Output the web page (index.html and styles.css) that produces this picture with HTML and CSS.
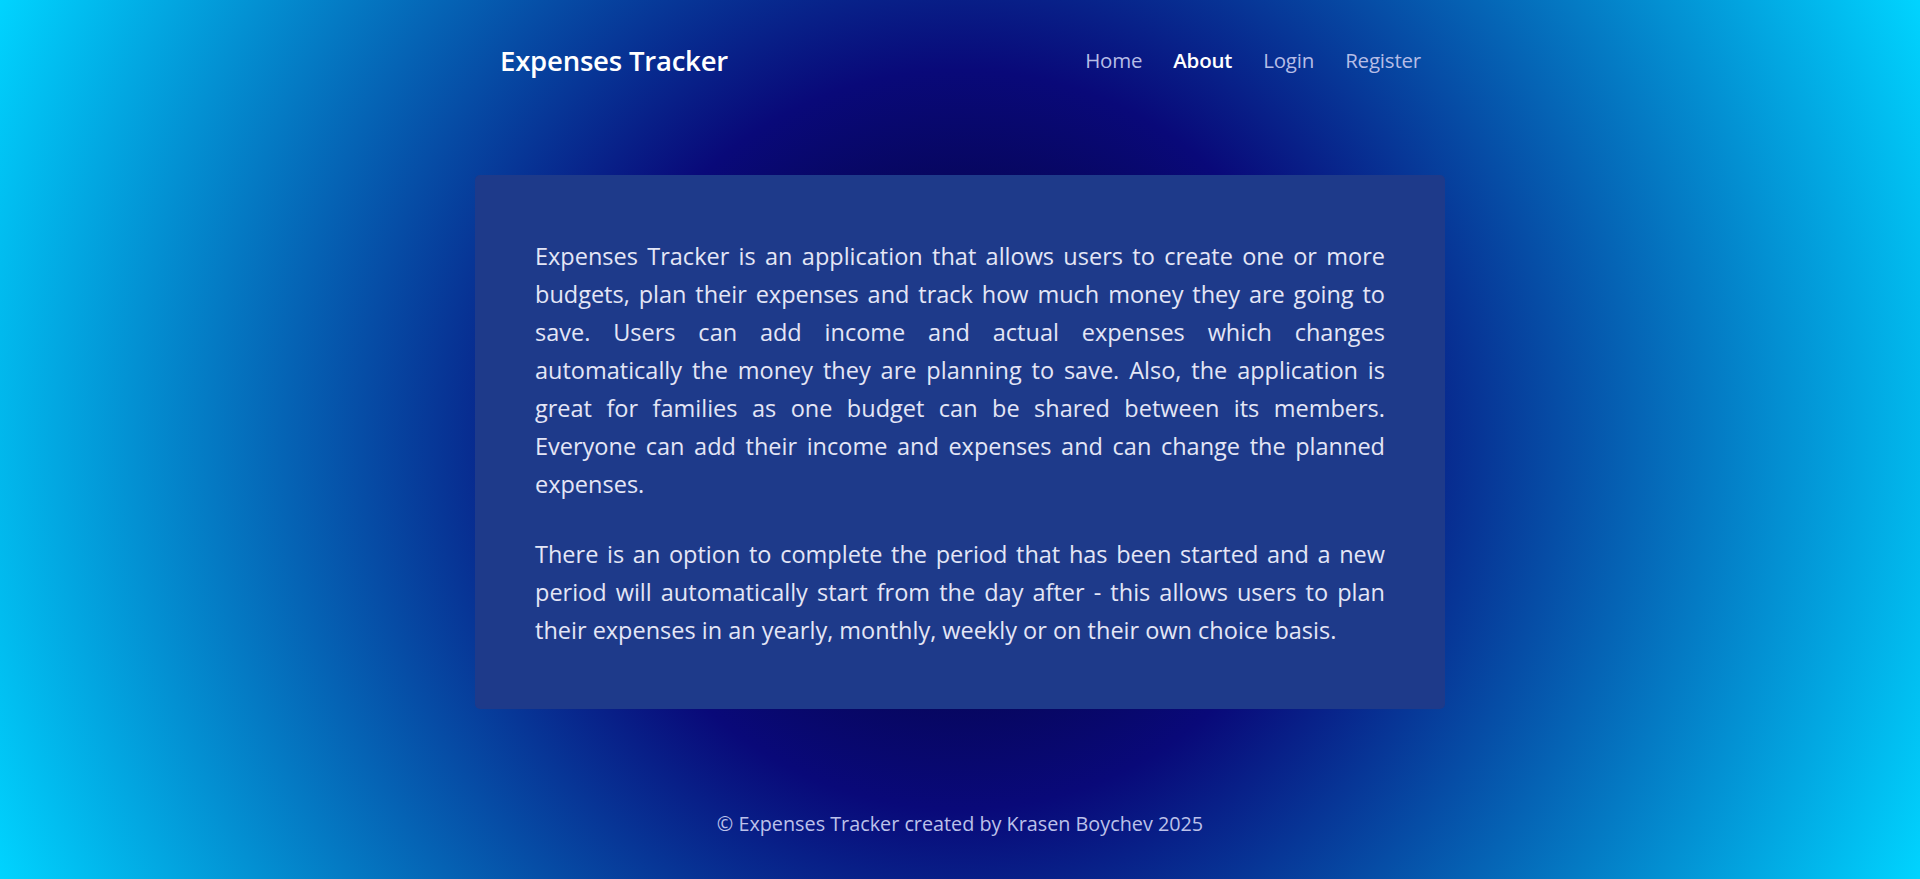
FILE: index.html
```html
<!DOCTYPE html>
<html lang="en">
<head>
<meta charset="utf-8">
<title>Expenses Tracker - About</title>
<link rel="stylesheet" href="styles.css">
</head>
<body>
<header class="site-header">
  <a class="brand" href="#">Expenses Tracker</a>
  <nav class="nav">
    <a class="nav-link" href="#">Home</a>
    <a class="nav-link active" href="#">About</a>
    <a class="nav-link" href="#">Login</a>
    <a class="nav-link" href="#">Register</a>
  </nav>
</header>
<main class="main">
  <section class="about-card">
    <p>Expenses Tracker is an application that allows users to create one or more budgets, plan their expenses and track how much money they are going to save. Users can add income and actual expenses which changes automatically the money they are planning to save. Also, the application is great for families as one budget can be shared between its members. Everyone can add their income and expenses and can change the planned expenses.</p>
    <p>There is an option to complete the period that has been started and a new period will automatically start from the day after - this allows users to plan their expenses in an yearly, monthly, weekly or on their own choice basis.</p>
  </section>
</main>
<footer class="site-footer">
  <p>&copy; Expenses Tracker created by Krasen Boychev 2025</p>
</footer>
</body>
</html>
```

FILE: styles.css
```css
* { box-sizing: border-box; }

html, body { height: 100%; }

body {
  margin: 0;
  min-height: 100vh;
  display: flex;
  flex-direction: column;
  font-family: "Open Sans", "Noto Sans", sans-serif;
  color: #e4e6f6;
  background: radial-gradient(circle at 50% 50%, #020024 0%, #090979 35%, #00d4ff 100%);
}

.site-header {
  width: 970px;
  margin: 0 auto;
  height: 120px;
  padding: 0 24px 0 25px;
  display: flex;
  align-items: center;
  justify-content: space-between;
}

.brand {
  color: #ffffff;
  text-decoration: none;
  font-size: 27.5px;
  font-weight: 600;
  letter-spacing: -0.2px;
}

.nav {
  display: flex;
  gap: 31px;
}

.nav-link {
  color: #b6bde6;
  text-decoration: none;
  font-size: 20.5px;
  font-weight: 500;
  letter-spacing: -0.2px;
}

.nav-link.active {
  color: #ffffff;
  font-weight: 600;
}

.main {
  flex: 1;
  padding-top: 55px;
}

.about-card {
  width: 970px;
  margin: 0 auto;
  background: #1e3a8a;
  border-radius: 5px;
  padding: 62px 60px 60px 60px;
}

.about-card p {
  margin: 0;
  font-size: 23.5px;
  line-height: 38px;
  text-align: justify;
  color: #e4e6f6;
}

.about-card p + p {
  margin-top: 32px;
}

.site-footer {
  text-align: center;
  padding-bottom: 43px;
}

.site-footer p {
  margin: 0;
  font-size: 19.8px;
  line-height: 24px;
  color: #bcc1ea;
}
```
